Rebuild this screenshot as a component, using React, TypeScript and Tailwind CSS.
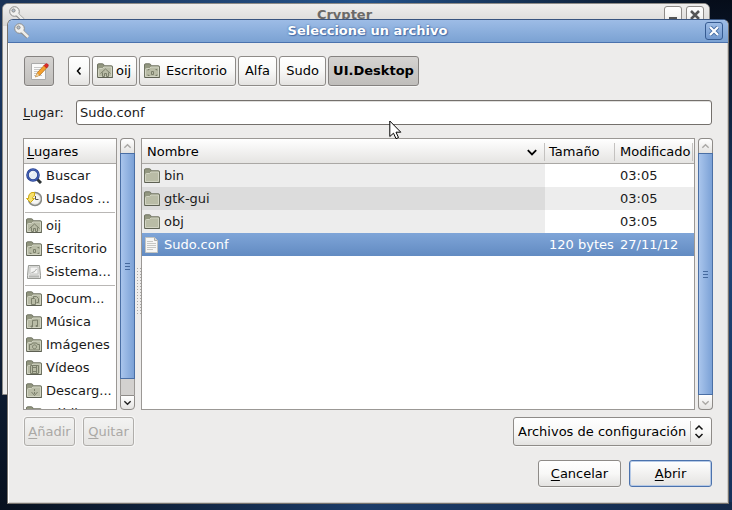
import React from "react";

type FolderKind = "plain" | "home" | "desktop" | "docs" | "music" | "photos" | "video" | "download" | "public";

function Emblem({ kind }: { kind: FolderKind }) {
  switch (kind) {
    case "home":
      return <path d="M3.500 10.500 8.500 6l5 4.500M5.500 9.500v4H7.500v-3h2v3h2V9.500" />;
    case "desktop":
      return <path d="M4 7.500V6.500H5.500M11.500 6.500H13V7.500M4 11.500v1H5.500M11.500 12.500H13v-1M7.500 8.500h2v3h-2z" />;
    case "docs":
      return <path d="M5.500 7.500h3l1 1v5h-4zM7.500 7V5.500h3l2 2v4h-2" />;
    case "music":
      return <path d="M6.500 12.500v-6l5-.5v6M5 12h1.500v1H5zM10 11.500h1.500v1H10z" />;
    case "photos":
      return <path d="M3.500 7.500h2l1-1.500h4l1 1.500h2v5.500h-10zM8.500 7.800a2 2 0 1 0 .01 0z" />;
    case "video":
      return <path d="M4.500 5.500h8v8h-8zM6.500 5.500v8M10.500 5.500v8M6.500 7.500h4M6.500 11.500h4" />;
    case "download":
      return <path d="M8.500 6v2M8.500 9v2M5.500 9l3 3.500 3-3.500" />;
    case "public":
      return <path d="M6 8h5v4H6z" />;
    default:
      return null;
  }
}

function Folder({ kind = "plain" }: { kind?: FolderKind }) {
  return (
    <svg className="size-4 shrink-0" viewBox="0 0 16 16" aria-hidden="true">
      <path d="M.5 14V2Q.5.800 1.500.800H5.500q1 0 1.300 1l.3 1h7.400q1 0 1 .800V14.500H1z" fill="#939780" stroke="#6f7362" />
      <path d="M1.500 13.500V6.500q0-1 1-1h3l1.500-1.500h7.500v9.500z" fill="#b9bca6" stroke="#d2d4c3" />
      <path d="M.5 14.500h15" stroke="#5d6053" />
      <g fill="none" stroke="#7b7f6b">
        <Emblem kind={kind} />
      </g>
    </svg>
  );
}

function KeyIcon() {
  return (
    <svg className="size-4 shrink-0" viewBox="0 0 16 16" aria-hidden="true">
      <path d="M8 8.500 14 14M11 13l2-2" stroke="#8a8a88" strokeWidth="4" />
      <circle cx="5.500" cy="5.500" r="4.800" fill="#f1f1ef" stroke="#8c8c8a" />
      <path d="m8 8 6.200 6M11.500 13l1.500-1.500" stroke="#ecece9" strokeWidth="2.500" />
      <circle cx="4.500" cy="4.500" r="1.600" fill="#b3bfcd" stroke="#8a8a88" />
    </svg>
  );
}

function SearchIcon() {
  return (
    <svg className="size-4 shrink-0" viewBox="0 0 16 16" aria-hidden="true">
      <path d="m11 11 4 4" stroke="#2e3436" strokeWidth="3" />
      <circle cx="7" cy="7" r="5.500" fill="#e6edf5" stroke="#27408f" strokeWidth="2.600" />
      <circle cx="7" cy="7" r="5.500" fill="none" stroke="#4a68bd" strokeWidth="1" />
      <path d="M4.500 6.500Q5 4.500 7 4.500" stroke="#fff" fill="none" />
    </svg>
  );
}

function RecentIcon() {
  return (
    <svg className="size-4 shrink-0" viewBox="0 0 16 16" aria-hidden="true">
      <circle cx="9" cy="8" r="6.500" fill="#e3e3e0" stroke="#888a85" strokeWidth="1.500" />
      <circle cx="9" cy="8" r="4.500" fill="#f6f6f4" />
      <path d="M9.500 5v3.500h3" fill="none" stroke="#555" />
      <path d="M.5 7.500 4.500 11.500 8.500 7.500H6.500C6.500 6 7.500 5 8.500 5V1.500H6C3.500 2 2.500 4.500 2.500 7.500z" fill="#f7e06a" stroke="#d0ab10" />
    </svg>
  );
}

function DiskIcon() {
  return (
    <svg className="size-4 shrink-0" viewBox="0 0 16 16" aria-hidden="true">
      <path d="M2.500 1.500h11l1 10v3h-13v-3z" fill="#e3e3e1" stroke="#979994" />
      <path d="M4 3h8v7H4z" fill="#f4f4f3" stroke="#c5c6c3" />
      <path d="M5.500 8.500c2 0 3.500-1 5-3.500" stroke="#a3a4a1" fill="none" />
      <path d="M3 12.500h10" stroke="#b5b6b3" strokeWidth="2" />
    </svg>
  );
}

function FileIcon() {
  return (
    <svg className="size-4 shrink-0" viewBox="0 0 16 16" aria-hidden="true">
      <path d="M1.500.5h9l3 3v12h-12z" fill="#f6f6f5" stroke="#c3c4c0" />
      <path d="M10.500.5v3h3" fill="#ddd" stroke="#b0b1ad" />
      <path d="M3 4.500h6M3 6.500h9M3 8.500h9M3 10.500h9M3 12.500h6" stroke="#c6c7c4" />
    </svg>
  );
}

function EditIcon() {
  return (
    <svg className="size-5" viewBox="0 0 20 20" aria-hidden="true">
      <path d="M2.500 2.500h14v16h-14z" fill="#fafafa" stroke="#aaa" />
      <path d="M5 6.500h8M5 8.500h7M5 10.500h5M5 12.500h4M5 14.500h8" stroke="#c8c8c8" />
      <path d="m6.500 16 2-4.500 7-7.500 2.500 2.500-7 7.500z" fill="#f5a02c" stroke="#b87420" strokeWidth=".8" />
      <path d="m6.500 16 1.700-3.700 2 2z" fill="#e9d3a8" />
      <path d="m15 4.500 1.500-1.500q1-1 2.200.2t.2 2.300L17.500 7z" fill="#dc2c2c" stroke="#b01818" strokeWidth=".6" />
    </svg>
  );
}

function Chevron({ dir, className }: { dir: "up" | "down" | "left"; className: string }) {
  const d = { up: "M1.500 6.500 5 3l3.500 3.500", down: "M1.500 3.500 5 7l3.500-3.500", left: "M6.500 1.500 3.500 5l3 3.500" }[dir];
  return (
    <svg className={className} viewBox="0 0 10 10" fill="none" stroke="currentColor" aria-hidden="true">
      <path d={d} />
    </svg>
  );
}

const face = "rounded-[3px] border border-[#8e8b88] bg-linear-to-b from-white via-[#f8f8f7] to-[#e4e3e1] shadow-[0_1px_0_#f8f8f7]";
const faceOn = "rounded-[3px] border border-[#858280] bg-linear-to-b from-[#d5d3d1] to-[#c0bebb] shadow-[0_1px_0_#f8f8f7]";
const faceOff = "rounded-[3px] border border-[#b0aeab] bg-linear-to-b from-[#f3f3f2] to-[#e5e4e2] text-[#aaa8a5] shadow-[0_0_0_1px_#f6f6f5]";

function ScrollBar({ label, partial }: { label: string; partial?: boolean }) {
  return (
    <div role="scrollbar" aria-label={label} aria-controls="files" aria-valuenow={0} className="flex w-[15px] shrink-0 flex-col">
      <button aria-label={label + ": subir"} className="grid h-[15px] place-items-center rounded-t-[4px] border border-b-0 border-[#8e8b88] bg-linear-to-b from-white to-[#e4e3e1] text-[#aaa8a5]">
        <Chevron dir="up" className="size-[9px] stroke-[1.5]" />
      </button>
      <div className={"flex flex-1 flex-col bg-[#d3d1cf] " + (partial ? "border-x border-[#9b9895]" : "")}>
        <div className={"grid flex-1 place-items-center border border-[#4a6fa5] bg-linear-to-r from-[#a9c5ec] to-[#7ba1d6] " + (partial ? "-mx-px" : "")}>
          <div className="h-[7px] w-[5px] border-y border-[#466a9e] py-[2px]">
            <div className="h-px bg-[#466a9e]" />
          </div>
        </div>
        {partial && <div className="h-4" />}
      </div>
      <button aria-label={label + ": bajar"} className={"grid h-[15px] place-items-center rounded-b-[4px] border border-[#8e8b88] bg-linear-to-b from-white to-[#e4e3e1] " + (partial ? "text-[#222]" : "border-t-0 text-[#aaa8a5]")}>
        <Chevron dir="down" className="size-[9px] stroke-[1.5]" />
      </button>
    </div>
  );
}

function Place({ icon, text }: { icon: React.ReactNode; text: string }) {
  return (
    <li>
      <button className="flex h-[23px] w-full items-center gap-1 pl-[2px] text-left whitespace-nowrap">
        {icon}
        <span>{text}</span>
      </button>
    </li>
  );
}

const Rule = () => <li role="separator" className="mx-px mt-[2px] mb-px h-px bg-[#b9b7b5]" />;

const files = [
  { name: "bin", size: "", date: "03:05" },
  { name: "gtk-gui", size: "", date: "03:05" },
  { name: "obj", size: "", date: "03:05" },
];

export default function App() {
  return (
    <main className="relative min-h-screen overflow-hidden bg-linear-to-r from-[#1b3357] via-[#23528a] to-[#050c18] pt-[19px] pr-[3px] pb-[6px] pl-[7px] font-['DejaVu_Sans',sans-serif] text-[13px] leading-4 text-[#1a1a1a]">
      <div className="absolute top-[60px] bottom-0 left-0 w-1/2 bg-linear-to-b from-[#1b3a66] to-[#08111f]" />
      <div className="absolute top-0 right-0 bottom-0 w-[22px] bg-linear-to-b from-[#060d1a] via-[#1f4476] to-[#16305a]" />
      <div className="absolute inset-x-0 bottom-0 h-[8px] bg-linear-to-r from-[#08111f] via-[#1c3c69] to-[#14294a]" />
      <section className="absolute top-[3px] right-[22px] left-[2px] h-[392px] rounded-t-[6px] border border-[#8d8b87] bg-[#edeceb]">
        <header className="flex h-[22px] items-start rounded-t-[5px] bg-linear-to-b from-[#efeeed] to-[#d8d7d5] pt-[2px] pr-[5px] pl-[6px]">
          <KeyIcon />
          <h2 className="flex-1 pt-px text-center font-bold text-[#6c6a68]">Crypter</h2>
          <div className="flex gap-1">
            <button aria-label="Minimizar" className={"grid size-[18px] place-items-center pt-[7px] " + face}>
              <span className="h-[3px] w-2 bg-[#555]" />
            </button>
            <button aria-label="Cerrar Crypter" className={"grid size-[18px] place-items-center text-[#555] " + face}>
              <svg className="size-[10px]" viewBox="0 0 10 10" stroke="currentColor" strokeWidth="2.500"><path d="m1 1 8 8M9 1 1 9" /></svg>
            </button>
          </div>
        </header>
      </section>

      <section role="dialog" aria-labelledby="title" className="relative rounded-t-[6px] border border-[#77736e] border-t-[#38547f] bg-[#edeceb] shadow-[inset_1px_0_0_#fff,inset_-1px_-1px_0_#cfcdca]">
        <header className="flex h-[23px] items-center rounded-t-[5px] border-b border-[#4b72ad] bg-linear-to-b from-[#9dbce6] to-[#7ba2d3] pr-[5px] pl-[6px]">
          <KeyIcon />
          <h1 id="title" className="flex-1 text-center font-bold text-white [text-shadow:0_0_2px_#3d639c,1px_1px_1px_#4b72ad]">Seleccione un archivo</h1>
          <button aria-label="Cerrar" className="grid size-[18px] place-items-center rounded-[3px] border border-[#365b91] bg-linear-to-b from-[#9dbce6] to-[#7299cf]">
            <svg className="size-[10px]" viewBox="0 0 10 10"><path d="m1 1 8 8M9 1 1 9" stroke="#456da5" strokeWidth="4" /><path d="m1 1 8 8M9 1 1 9" stroke="#fff" strokeWidth="2.200" /></svg>
          </button>
        </header>

        <div className="pt-[13px] pr-[16px] pb-[16px] pl-[15px]">
          <nav aria-label="Ruta" className="flex h-[30px] gap-[2px] pl-px text-black">
            <button aria-label="Escribir un nombre de archivo" className={"mr-3 grid w-[30px] place-items-center " + faceOn}><EditIcon /></button>
            <button aria-label="Atrás" className={"grid w-[22px] place-items-center " + face}><Chevron dir="left" className="size-[10px] stroke-[1.5]" /></button>
            <button className={"flex w-[45px] items-center gap-[3px] pl-1 " + face}><Folder kind="home" />oij</button>
            <button className={"flex w-[97px] items-center gap-[6px] pl-1 " + face}><Folder kind="desktop" />Escritorio</button>
            <button className={"w-[39px] " + face}>Alfa</button>
            <button className={"w-[47px] " + face}>Sudo</button>
            <button aria-pressed="true" className={"w-[91px] font-bold " + faceOn}>UI.Desktop</button>
          </nav>

          <div className="mt-[14px] flex items-center">
            <label htmlFor="place" className="w-[53px]"><u className="underline-offset-2">L</u>ugar:</label>
            <input id="place" defaultValue="Sudo.conf" className="h-[25px] min-w-0 flex-1 rounded-[3px] border border-[#74706c] bg-white px-[3px] shadow-[inset_0_1px_0_#e0dfdd]" />
          </div>

          <div className="mt-[13px] flex h-[272px]">
            <div className="w-[94px] shrink-0 overflow-hidden border border-[#9b9895] bg-white">
              <h2 className="h-[25px] border-b border-[#aaa8a5] bg-linear-to-b from-white to-[#e4e3e1] pt-[5px] pl-[3px] text-black"><u className="underline-offset-2">L</u>ugares</h2>
              <ul>
                <Place icon={<SearchIcon />} text="Buscar" />
                <Place icon={<RecentIcon />} text="Usados ..." />
                <Rule />
                <Place icon={<Folder kind="home" />} text="oij" />
                <Place icon={<Folder kind="desktop" />} text="Escritorio" />
                <Place icon={<DiskIcon />} text="Sistema..." />
                <Rule />
                <Place icon={<Folder kind="docs" />} text="Docum..." />
                <Place icon={<Folder kind="music" />} text="Música" />
                <Place icon={<Folder kind="photos" />} text="Imágenes" />
                <Place icon={<Folder kind="video" />} text="Vídeos" />
                <Place icon={<Folder kind="download" />} text="Descarg..." />
                <Place icon={<Folder kind="public" />} text="públi..." />
              </ul>
            </div>
            <div className="ml-[3px] flex"><ScrollBar label="Lugares" partial /></div>
            <div className="flex w-[6px] items-center justify-center pt-[34px]">
              <div className="h-[48px] w-[5px] bg-[radial-gradient(#aaa8a5_35%,transparent_40%)] bg-size-[3px_3px]" />
            </div>
            <div id="files" className="min-w-0 flex-1 border border-[#9b9895] bg-white">
              <table className="w-full table-fixed border-collapse text-left">
                <colgroup><col /><col className="w-[70px]" /><col className="w-[79px]" /></colgroup>
                <thead>
                  <tr className="h-[25px] bg-linear-to-b from-white to-[#e4e3e1] text-black shadow-[inset_0_-1px_0_#aaa8a5]">
                    <th className="p-0 pl-[5px] font-normal">
                      <div className="flex h-[18px] items-center justify-between border-r border-[#c4c2c0] pr-[6px]">Nombre<Chevron dir="down" className="size-3 stroke-[1.5]" /></div>
                    </th>
                    <th className="p-0 pl-[4px] font-normal"><div className="flex h-[18px] items-center border-r border-[#c4c2c0]">Tamaño</div></th>
                    <th className="p-0 pl-[5px] font-normal"><div className="mr-px flex h-[18px] items-center border-r border-[#c4c2c0]">Modificado</div></th>
                  </tr>
                </thead>
                <tbody>
                  {files.map((f) => (
                    <tr key={f.name} className="h-[23px] even:bg-[#ededed] [&:nth-child(even)>td:first-child]:bg-[#dcdcdc]">
                      <td className="bg-[#ededed] p-0 pl-[2px]"><div className="flex items-center gap-1"><Folder />{f.name}</div></td>
                      <td className="p-0">{f.size}</td>
                      <td className="p-0 pl-[5px]">{f.date}</td>
                    </tr>
                  ))}
                  <tr aria-selected="true" className="h-[23px] bg-linear-to-b from-[#7fa5d8] to-[#628bc2] text-white">
                    <td className="p-0 pl-[2px]"><div className="flex items-center gap-1"><FileIcon />Sudo.conf</div></td>
                    <td className="p-0 pl-[4px] whitespace-nowrap">120 bytes</td>
                    <td className="p-0 pl-[5px]">27/11/12</td>
                  </tr>
                </tbody>
              </table>
            </div>
            <div className="ml-[3px] -mr-px flex"><ScrollBar label="Archivos" /></div>
          </div>

          <div className="mt-[7px] flex h-[29px] gap-[8px] pl-px">
            <button disabled className={"w-[51px] " + faceOff}><u className="underline-offset-2">A</u>ñadir</button>
            <button disabled className={"w-[51px] " + faceOff}><u className="underline-offset-2">Q</u>uitar</button>
            <div className={"relative ml-auto w-[199px] text-black " + face}>
              <select aria-label="Tipo de archivo" className="h-full w-full appearance-none bg-transparent pl-1 outline-none">
                <option>Archivos de configuración</option>
              </select>
              <svg className="pointer-events-none absolute top-[3px] right-[3px] h-[21px] w-[18px]" viewBox="0 0 18 21" fill="none" aria-hidden="true">
                <path d="M.5 0v21" stroke="#b9b7b5" />
                <path d="M5.500 8.500 9 5l3.500 3.500M5.500 13 9 16.500l3.500-3.500" stroke="#111" strokeWidth="1.500" />
              </svg>
            </div>
          </div>

          <div className="mt-[14px] flex h-[27px] justify-end gap-2 text-black">
            <button className={"w-[83px] " + face}><u className="underline-offset-2">C</u>ancelar</button>
            <button className="w-[83px] rounded-[3px] border border-[#4b72ad] bg-linear-to-b from-white to-[#e4e3e1] shadow-[inset_0_0_0_1px_#b5c9e6]"><u className="underline-offset-2">A</u>brir</button>
          </div>
        </div>
      </section>

      <svg className="pointer-events-none absolute top-[120px] left-[389px] h-5 w-[13px]" viewBox="0 0 13 20" aria-hidden="true">
        <path d="M.8 1v15.500l3.700-3.300 2.500 5.500 2.500-1.200-2.500-5.300h4.800z" fill="#fff" stroke="#000" />
      </svg>
    </main>
  );
}
